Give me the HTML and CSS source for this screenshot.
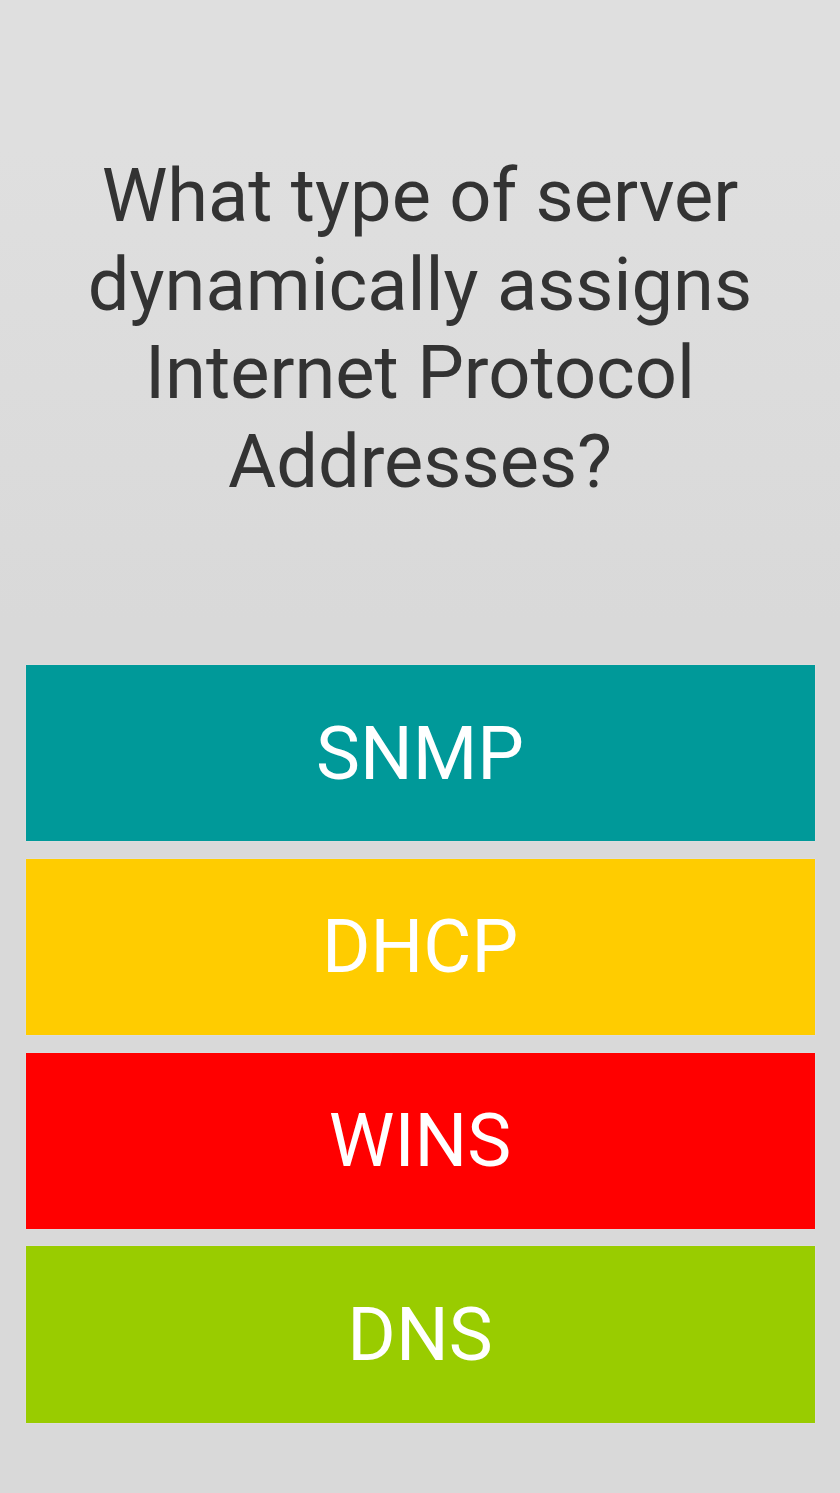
FILE: index.html
```html
<!DOCTYPE html>
<html lang="en">
<head>
  <meta charset="UTF-8">
  <title>Quiz</title>
  <link rel="stylesheet" href="styles.css">
</head>
<body>
  <div class="screen">
    <div class="question">
      What type of server dynamically assigns Internet Protocol Addresses?
    </div>

    <div class="answers">
      <div class="answer teal">SNMP</div>
      <div class="answer yellow">DHCP</div>
      <div class="answer red">WINS</div>
      <div class="answer green">DNS</div>
    </div>
  </div>
</body>
</html>
```

FILE: styles.css
```css
:root {
  --bg-top: #dfdfdf;
  --bg-bottom: #d9d9d9;
  --text-color: #333333;
}

body {
  margin: 0;
  font-family: Roboto, 'Noto Sans', Arial, sans-serif;
  color: var(--text-color);
  background: var(--bg-bottom);
}

.screen {
  min-height: 1493px;
  display: flex;
  flex-direction: column;
  background: linear-gradient(to bottom, var(--bg-top) 0px, var(--bg-top) 150px, var(--bg-bottom) 620px, var(--bg-bottom) 100%);
}

.question {
  flex: none;
  padding: 152px 60px 0;
  height: 665px;
  box-sizing: border-box;
  text-align: center;
  font-size: 74px;
  line-height: 88.5px;
  font-weight: 400;
}

.answers {
  display: flex;
  flex-direction: column;
  gap: 17.5px;
  padding: 0 25.5px;
}

.answer {
  height: 176.3px;
  display: flex;
  align-items: center;
  justify-content: center;
  color: #ffffff;
  font-size: 74px;
  box-shadow: 0 0 1px rgba(255, 255, 255, 0.5);
}

.answer.teal {
  background: #009999;
}

.answer.yellow {
  background: #ffcc00;
}

.answer.red {
  background: #ff0000;
}

.answer.green {
  background: #99cc00;
}
```
